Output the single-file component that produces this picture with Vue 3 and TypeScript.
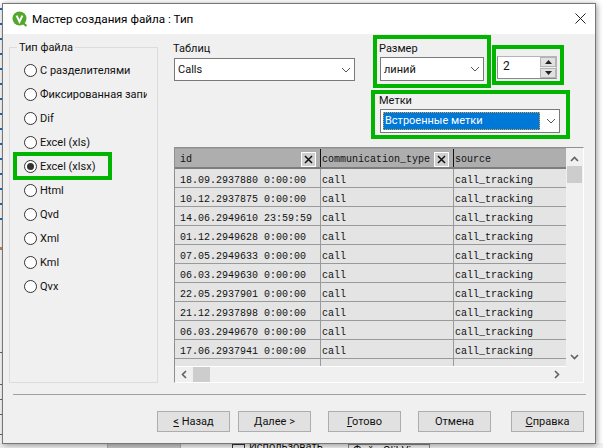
<script setup lang="ts">
const types = ['С разделителями', 'Фиксированная запись', 'Dif', 'Excel (xls)', 'Excel (xlsx)', 'Html', 'Qvd', 'Xml', 'Kml', 'Qvx']
const rows: string[] = [
  '18.09.2937880 0:00:00', '10.12.2937875 0:00:00', '14.06.2949610 23:59:59', '01.12.2949628 0:00:00',
  '07.05.2949633 0:00:00', '06.03.2949630 0:00:00', '22.05.2937901 0:00:00', '21.12.2937898 0:00:00',
  '06.03.2949670 0:00:00', '17.06.2937941 0:00:00',
]
const blueTicks: number[] = Array.from({ length: 15 }, (_, i) => 8 + i * 15)
const greyTicks: number[] = [352, 384, 399, 414, 434]
</script>

<template>
  <div class="screen">
    <svg class="ticks" width="2" height="448" viewBox="0 0 2 448">
      <rect v-for="y in blueTicks" :key="y" x="0" :y="y" width="2" height="2" fill="#1a6fc4" />
      <rect x="0" y="247" width="2" height="3" fill="#c98a5a" />
      <rect v-for="y in greyTicks" :key="y" x="0" :y="y" width="2" height="1" fill="#666" />
    </svg>
    <div class="behind">
      <span class="b-block"></span>
      <span class="b-check"></span><span class="b-text">Использовать</span>
      <span class="b-tab">Файл QlikView</span>
    </div>
    <div class="dialog">
      <header class="titlebar">
        <svg class="logo" width="16" height="16" viewBox="0 0 16 16">
          <circle cx="7.5" cy="7.5" r="7" fill="#54a72c" />
          <path d="M11 12 L14.5 15" stroke="#54a72c" stroke-width="2.2" />
          <path d="M4.6 4.6 L7.5 10.6 L10.4 4.6" fill="none" stroke="#fff" stroke-width="2" />
        </svg>
        <span class="title">Мастер создания файла : Тип</span>
        <svg class="close" width="11" height="11" viewBox="0 0 11 11">
          <path d="M0.5 0.5 L10.5 10.5 M10.5 0.5 L0.5 10.5" stroke="#222" stroke-width="1" />
        </svg>
      </header>

      <main class="content">
        <section class="types">
          <span class="legend">Тип файла</span>
          <div class="radio" v-for="t in types" :key="t">
            <span class="dot" :class="{ on: t === 'Excel (xlsx)' }"></span>
            <span class="radio-text">{{ t }}</span>
          </div>
          <span class="mark mark-xlsx"></span>
        </section>

        <section class="panel">
          <div class="controls">
            <div class="table-field">
              <label>Таблиц</label>
              <div class="combo"><span>Calls</span><svg class="chev" width="10" height="6" viewBox="0 0 10 6"><path d="M1 1 L5 5 L9 1" fill="none" stroke="#555" /></svg></div>
            </div>
            <div class="right-fields">
              <div class="size-row">
                <div class="size-field">
                  <label>Размер</label>
                  <div class="combo small"><span>линий</span><svg class="chev" width="10" height="6" viewBox="0 0 10 6"><path d="M1 1 L5 5 L9 1" fill="none" stroke="#555" /></svg></div>
                  <span class="mark mark-size"></span>
                </div>
                <div class="spin">
                  <span class="spin-val">2</span>
                  <div class="spin-btns">
                    <span class="spin-btn"><svg width="7" height="4" viewBox="0 0 7 4"><path d="M3.5 0 L7 4 L0 4 Z" fill="#222" /></svg></span>
                    <span class="spin-btn"><svg width="7" height="4" viewBox="0 0 7 4"><path d="M0 0 L7 0 L3.5 4 Z" fill="#222" /></svg></span>
                  </div>
                  <span class="mark mark-spin"></span>
                </div>
              </div>
              <div class="labels-field">
                <label>Метки</label>
                <div class="combo wide">
                  <span class="selected">Встроенные метки</span>
                  <svg class="chev" width="10" height="6" viewBox="0 0 10 6"><path d="M1 1 L5 5 L9 1" fill="none" stroke="#555" /></svg>
                </div>
                <span class="mark mark-labels"></span>
              </div>
            </div>
          </div>

          <div class="grid-frame">
            <div class="grid-main">
              <div class="grid">
                <div class="row head">
                  <div class="cell c1">id<span class="x"><svg width="9" height="9" viewBox="0 0 9 9"><path d="M1 1 L8 8 M8 1 L1 8" stroke="#111" stroke-width="1.5" /></svg></span></div>
                  <div class="cell c2">communication_type<span class="x"><svg width="9" height="9" viewBox="0 0 9 9"><path d="M1 1 L8 8 M8 1 L1 8" stroke="#111" stroke-width="1.5" /></svg></span></div>
                  <div class="cell c3">source</div>
                </div>
                <div class="row" v-for="r in rows" :key="r">
                  <div class="cell c1">{{ r }}</div>
                  <div class="cell c2">call</div>
                  <div class="cell c3">call_tracking</div>
                </div>
                <div class="row tail"><div class="cell c1"></div><div class="cell c2"></div><div class="cell c3"></div></div>
              </div>
              <div class="vbar">
                <svg width="9" height="6" viewBox="0 0 9 6"><path d="M1 5 L4.5 1.5 L8 5" fill="none" stroke="#606060" stroke-width="1.6" /></svg>
                <span class="vthumb"></span>
                <svg class="vdown" width="9" height="6" viewBox="0 0 9 6"><path d="M1 1 L4.5 4.5 L8 1" fill="none" stroke="#606060" stroke-width="1.6" /></svg>
              </div>
            </div>
            <div class="hbar">
              <svg width="6" height="9" viewBox="0 0 6 9"><path d="M5 1 L1.5 4.5 L5 8" fill="none" stroke="#606060" stroke-width="1.6" /></svg>
              <span class="hthumb"></span>
              <svg class="hright" width="6" height="9" viewBox="0 0 6 9"><path d="M1 1 L4.5 4.5 L1 8" fill="none" stroke="#606060" stroke-width="1.6" /></svg>
            </div>
          </div>
        </section>
      </main>

      <div class="divider"></div>

      <footer class="buttons">
        <button class="btn"><u>&lt;</u> Назад</button>
        <button class="btn"><u>Д</u>алее &gt;</button>
        <button class="btn gap"><u>Г</u>отово</button>
        <button class="btn gap">Отмена</button>
        <button class="btn gap2"><u>С</u>правка</button>
      </footer>
    </div>
  </div>
</template>

<style>
html, body { margin: 0; background: #fff; }
</style>

<style scoped>
.screen {
  width: 603px;
  height: 448px;
  position: relative;
  overflow: hidden;
  background: #fff;
  font-family: Roboto, "Noto Sans", sans-serif;
  font-size: 11px;
  color: #111;
}
.ticks { position: absolute; left: 0; top: 0; }
.behind { position: absolute; left: 0; top: 443px; width: 603px; height: 5px; background: #f0f0f0; }
.b-block { position: absolute; left: 107px; top: 1px; width: 72px; height: 5px; background: #c8c8c8; border-left: 1px solid #aaa; border-right: 1px solid #aaa; }
.b-check { position: absolute; left: 232px; top: 1px; width: 11px; height: 11px; border: 1px solid #333; }
.b-text { position: absolute; left: 249px; top: -3px; white-space: nowrap; }
.b-tab { position: absolute; left: 348px; top: 1px; padding: 0 4px; height: 14px; line-height: 11px; border: 1px solid #888; white-space: nowrap; }
.dialog {
  position: absolute;
  left: 2px;
  top: 3px;
  width: 594px;
  height: 441px;
  box-sizing: border-box;
  background: #f0f0f0;
  border: 1px solid #777;
  box-shadow: 1px 1px 6px rgba(0, 0, 0, 0.4);
  display: flex;
  flex-direction: column;
}
.titlebar {
  height: 30px;
  flex: none;
  background: #fff;
  display: flex;
  align-items: center;
  padding: 0 9px 0 9px;
  gap: 4px;
}
.logo { margin-top: -1px; }
.title { font-size: 11.7px; flex: 1; color: #000; }
.close { margin-top: -2px; }
.content {
  display: flex;
  height: 360px;
  flex: none;
  padding: 13px 0 0 6px;
  box-sizing: border-box;
}
.types {
  position: relative;
  width: 149px;
  height: 336px;
  box-sizing: border-box;
  border: 1px solid #dcdcdc;
  padding-top: 10px;
  flex: none;
}
.legend {
  position: absolute;
  left: 7px;
  top: -7px;
  padding: 0 2px;
  background: #f0f0f0;
}
.radio {
  height: 24px;
  display: flex;
  align-items: center;
  padding-left: 14px;
  width: 137px;
  overflow: hidden;
  box-sizing: border-box;
  white-space: nowrap;
}
.dot {
  width: 13px;
  height: 13px;
  box-sizing: border-box;
  border: 1px solid #333;
  border-radius: 50%;
  background: #fff;
  flex: none;
  margin-right: 3px;
  position: relative;
}
.dot.on::after {
  content: "";
  position: absolute;
  left: 2px;
  top: 2px;
  width: 7px;
  height: 7px;
  border-radius: 50%;
  background: #333;
}
.panel { margin: -6px 0 0 16px; width: 410px; flex: none; }
.controls { display: flex; height: 106px; }
.table-field { width: 181px; flex: none; }
.table-field label { display: block; line-height: 16px; height: 17px; margin-left: -1px; }
.combo {
  box-sizing: border-box;
  height: 23px;
  border: 1px solid #7a7a7a;
  background: #fff;
  display: flex;
  align-items: center;
  justify-content: space-between;
  padding: 0 3px 0 3px;
}
.right-fields { margin-left: 25px; }
.size-row { display: flex; align-items: flex-start; height: 40px; }
.size-field, .labels-field, .spin { position: relative; }
.size-field { width: 117px; flex: none; }
.size-field label, .labels-field label { display: block; height: 16px; line-height: 16px; margin-left: -1px; }
.combo.small { width: 104px; height: 24px; }
.spin {
  margin-top: 15px;
  box-sizing: border-box;
  width: 60px;
  height: 23px;
  border: 1px solid #8a8a8a;
  border-right-color: #b5b5b5;
  border-top-color: #b5b5b5;
  background: #f0f0f0;
  display: flex;
}
.spin-val { width: 42px; background: #fff; padding-left: 5px; box-sizing: border-box; font-size: 12px; line-height: 19px; flex: none; }
.spin-btns { display: flex; flex-direction: column; gap: 1px; flex: 1; }
.spin-btn { flex: 1; display: flex; align-items: center; justify-content: center; background: #e1e1e1; border: 1px solid #b5b5b5; }
.labels-field { margin-top: 12px; }
.combo.wide { width: 180px; height: 24px; padding: 0 3px 0 2px; }
.selected {
  background: #0078d7;
  color: #fff;
  width: 157px;
  height: 18px;
  line-height: 18px;
  padding-left: 2px;
  box-sizing: border-box;
  outline: 1px dotted #e8a040;
  outline-offset: -1px;
}
.mark { position: absolute; border: 4px solid #00b400; box-sizing: border-box; pointer-events: none; }
.mark-xlsx { left: 3px; top: 104px; width: 99px; height: 28px; }
.mark-size { left: -7px; top: -6px; width: 118px; height: 53px; }
.mark-spin { left: -6px; top: -12px; width: 72px; height: 40px; }
.mark-labels { left: -9px; top: -3px; width: 199px; height: 49px; }
.grid-frame {
  box-sizing: border-box;
  height: 236px;
  width: 410px;
  border-top: 1px solid #8f8f8f;
  border-left: 1px solid #8f8f8f;
  border-right: 1px solid #fff;
  border-bottom: 1px solid #fff;
}
.grid-main { display: flex; height: 218px; }
.grid { width: 391px; flex: none; overflow: hidden; font-family: "Liberation Mono", monospace; font-size: 10px; background: #fff; }
.row { display: flex; height: 19px; box-sizing: border-box; background: #e4e4e4; border-bottom: 1px solid #9a9a9a; color: #111; }
.row.head { height: 21px; background: #aeaeae; border-top: 1px solid #a0a0a0; border-bottom: 2px solid #7d7d7d; }
.row.tail { border-bottom: 0; height: 7px; }
.cell { box-sizing: border-box; position: relative; border-right: 1px solid #9a9a9a; white-space: nowrap; overflow: hidden; flex: none; padding-top: 5px; line-height: 14px; }
.head .cell { padding-top: 4px; }
.c1 { width: 146px; padding-left: 5px; }
.c2 { width: 133px; padding-left: 1px; }
.c3 { width: 112px; padding-left: 1px; border-right: 0; }
.head .c1, .head .c2 { border-right: 1px solid #111; }
.x {
  position: absolute;
  right: 4px;
  top: 3px;
  width: 15px;
  height: 15px;
  box-sizing: border-box;
  background: #d0d0d0;
  border: 1px solid #fff;
  display: flex;
  align-items: center;
  justify-content: center;
}
.vbar { flex: 1; display: flex; flex-direction: column; align-items: center; padding-top: 8px; background: #f0f0f0; }
.vthumb { display: block; width: 15px; height: 17px; margin-top: 4px; background: #cdcdcd; }
.vdown { margin-top: auto; margin-bottom: 6px; }
.hbar { height: 16px; display: flex; align-items: center; padding: 0 6px; margin-right: 17px; background: #f0f0f0; border-top: 1px solid #fff; box-sizing: border-box; }
.hthumb { width: 17px; height: 15px; margin-left: 6px; background: #cdcdcd; }
.hright { margin-left: auto; margin-right: 0; }
.divider { height: 1px; margin: 0 9px 0 10px; background: #a0a0a0; flex: none; }
.buttons { display: flex; padding: 16px 0 0 154px; }
.btn {
  width: 73px;
  height: 21px;
  box-sizing: border-box;
  background: #e1e1e1;
  border: 1px solid #adadad;
  padding: 0;
  font: inherit;
  color: #111;
  margin-right: 8px;
}
.btn.gap { margin-left: 9px; margin-right: 8px; }
.btn.gap2 { margin-left: 12px; margin-right: 0; }
</style>
